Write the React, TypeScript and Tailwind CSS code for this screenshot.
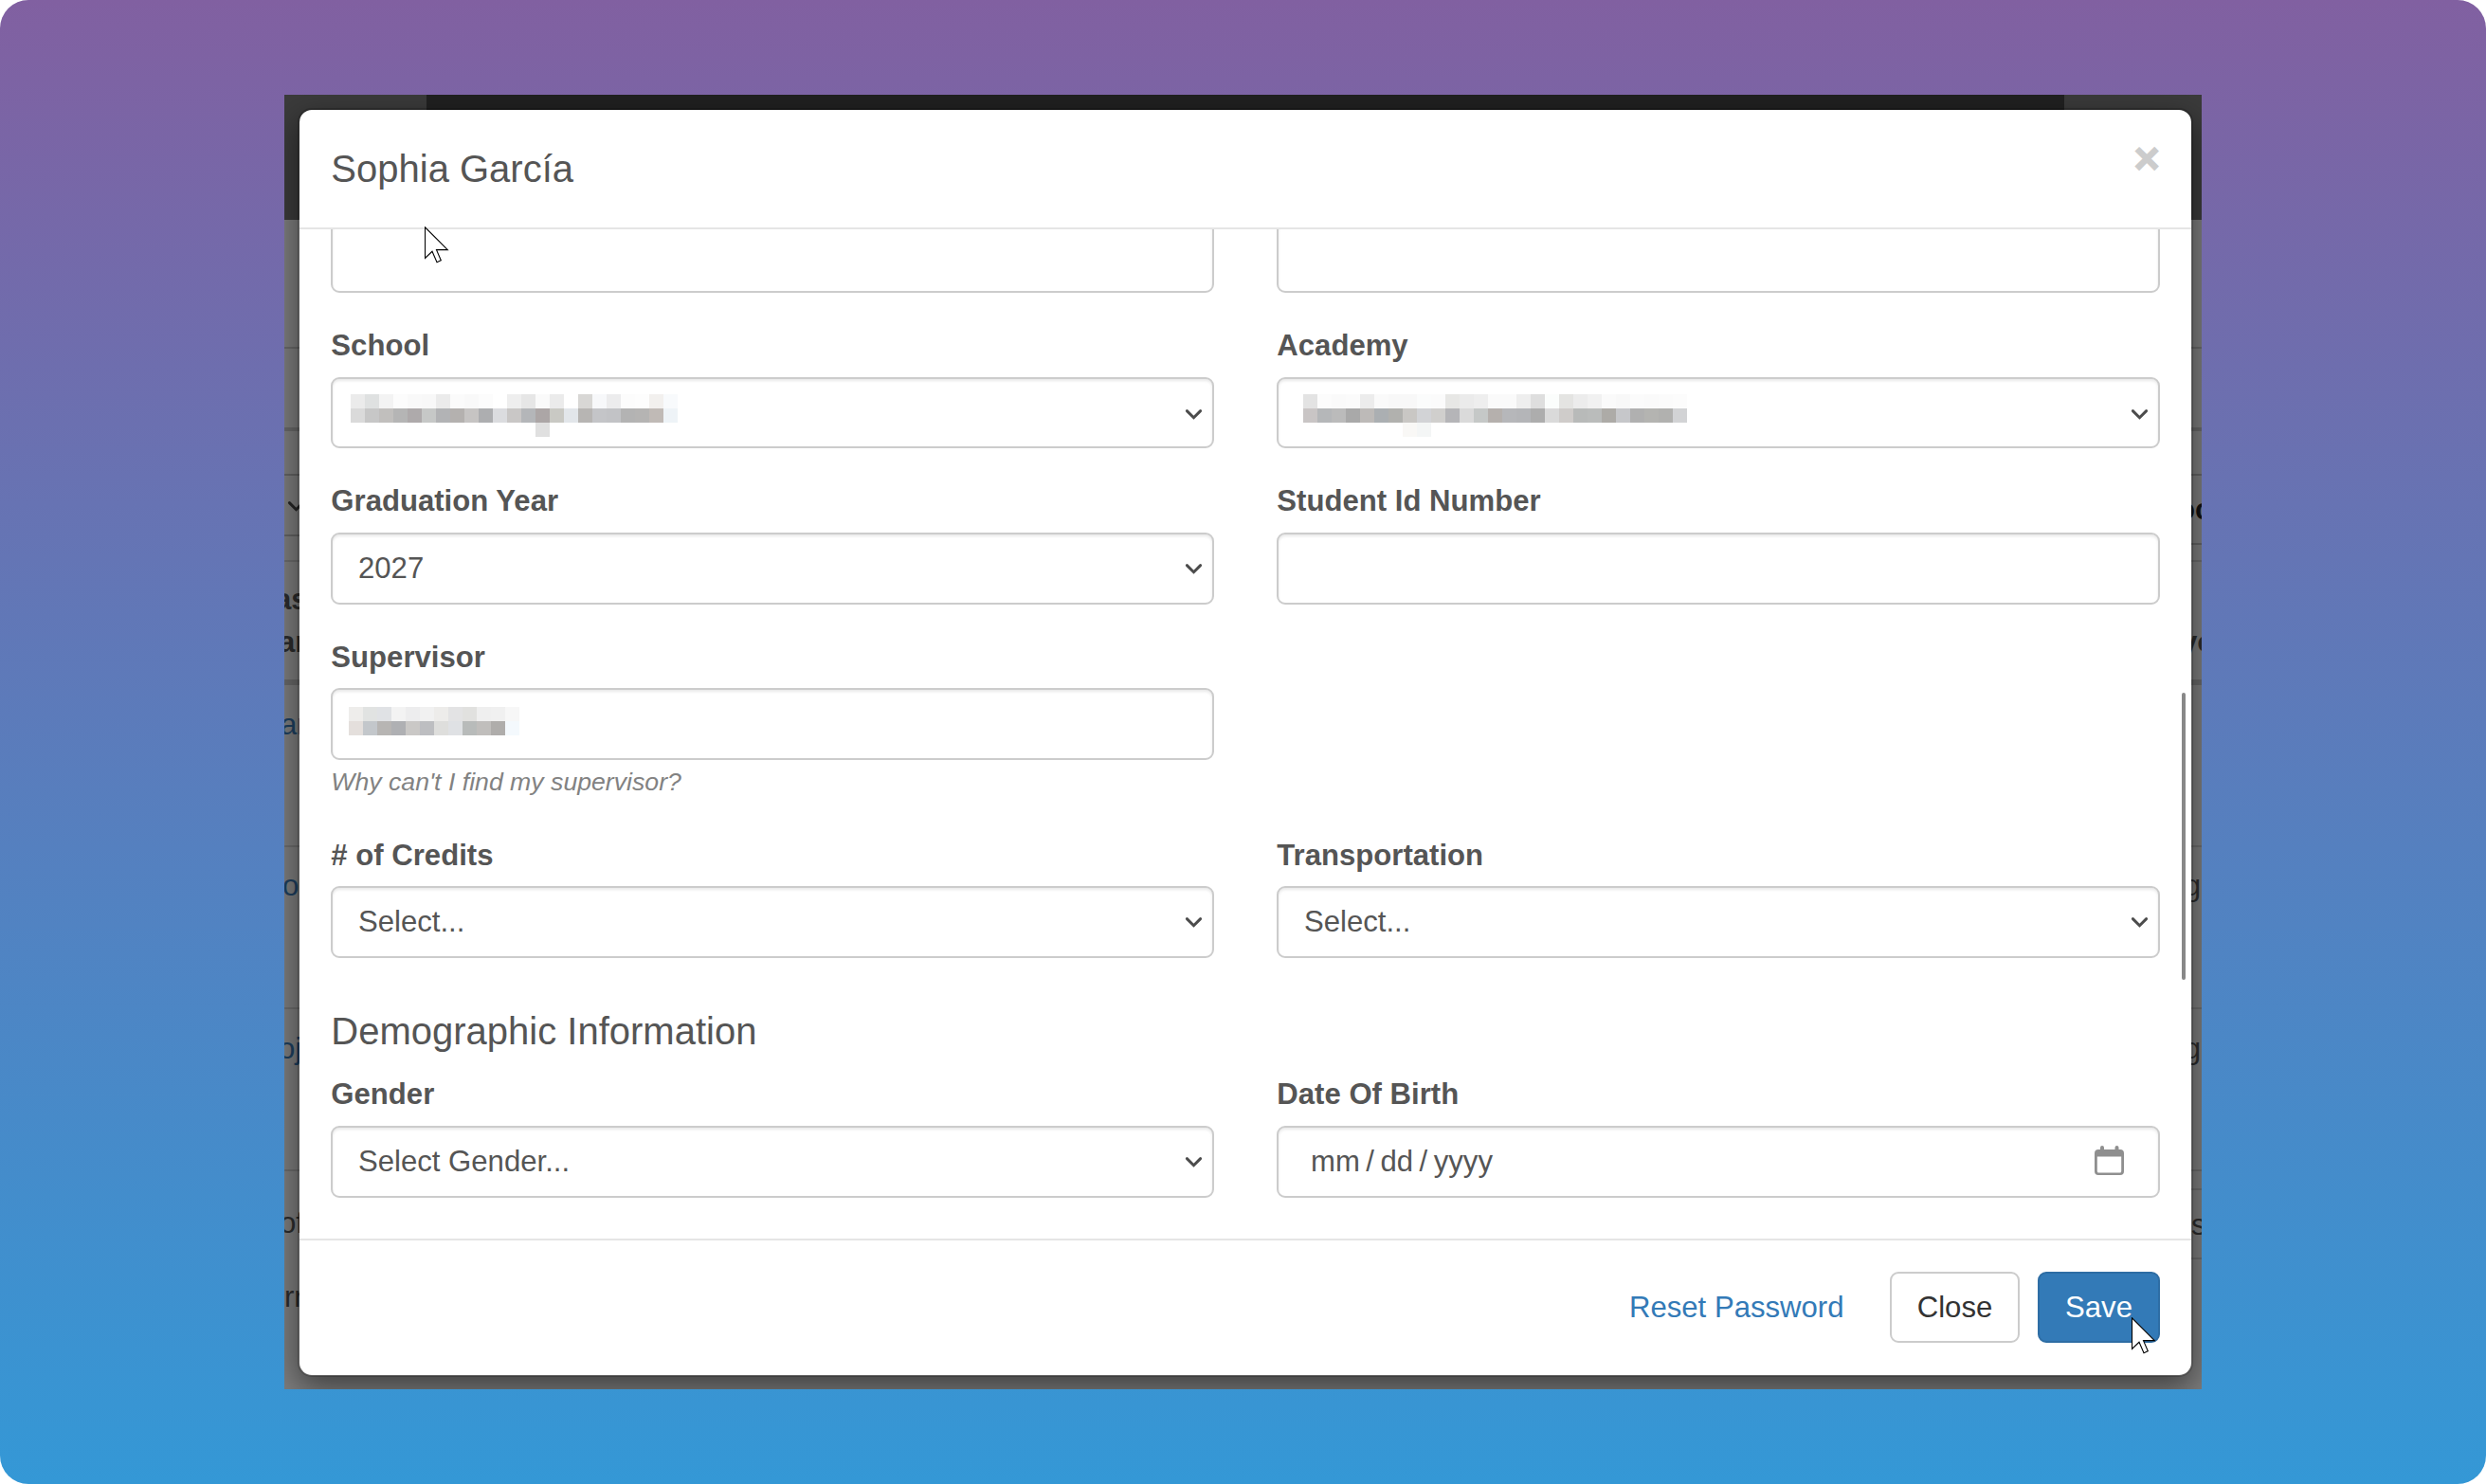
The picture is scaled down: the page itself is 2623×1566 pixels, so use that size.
import { useState, type ReactNode } from "react";

interface FieldProps {
  label: string;
  children: ReactNode;
  help?: string;
}

const CELL = 15;

// Each string is one row of the redaction mosaic, "-" leaves a cell empty
const SCHOOL_MOSAIC = [
  "ebebeb dfe1e1 f3f3f3 fcfcfc f9f9f9 f8f8f8 ebebeb fbfbfb f9f9f9 fcfcfc - eeeeee e6e6e6 fafafa ebebeb - d8d7d5 f7f8fa ececed fcfcfc fdfdfd f2f0ee f8fafc",
  "dadada c7c7c7 c1bfbd b5b5b5 aeaaab c6c8c7 b2b3b5 b4b1af c6c4c3 adaeb0 dbdcdf c9c7c6 b4b6b9 aca6a6 c9c9c4 e2e6ea b7b5b3 c4c5c8 c2c3c6 b3b3b3 b5b4b3 c0bab6 eef3f7",
  "- - - - - - - - - - - - - e0e0e0",
];

const ACADEMY_MOSAIC = [
  "e3e3e3 fcfcfc fafafa fbfbfb ececec fafafa f8f8f8 f8f8f8 fbfcfc fbfbfb e7e7e5 ebebeb eeeeee fafafa fafafa eeeeee dedede fbfdfc e4e4e2 ececec f1f1f1 fafafa f8f8f8 fbfbfb fafafa fbfbfb fcfcfc",
  "c9c5c5 b5b7b9 bbbbbb a9a9a9 bdbab8 abafb2 b1b1ae c9c7c4 d2d3d6 d0cfcd b5b5b8 dadada c5c8c7 b5b0ad b6b7ba b4b5b8 adadad dadada cfccca b8bab9 babcbb adaba7 c6c7ca b0b0b0 b4b4b1 b1b1af d2d3d5",
  "- - - - - - - f9f8f6 f4f6f6",
];

const SUPERVISOR_MOSAIC = [
  "eeedeb e1e3e2 e0e2e5 f3f3f3 ededee f1f1f1 edecea e3e3e4 e1e1df efefef f0f0f0 f7f7f7",
  "e4dfdc c3c7cb b7b5b3 afb0b3 cac8c6 bdbec1 dededc dfe1e4 b8bbba c0bebc afadab f4f9fd",
];

function Mosaic({ rows, className }: { rows: string[]; className: string }) {
  return (
    <div className={className} aria-hidden="true">
      {rows.map((row, y) => (
        <div key={y} className="flex h-[15px]">
          {row.split(" ").map((color, x) => (
            <span
              key={x}
              className="h-full"
              style={{ width: CELL, backgroundColor: color === "-" ? undefined : `#${color}` }}
            />
          ))}
        </div>
      ))}
    </div>
  );
}

function Field({ label, children, help }: FieldProps) {
  return (
    <div className="mb-[33.33px]">
      <label className="mb-[10.11px] block pt-px font-bold">{label}</label>
      {children}
      {help && <p className="-mb-px pt-px text-[26.67px] text-[#828282] italic">{help}</p>}
    </div>
  );
}

function Control({ children, center = true }: { children?: ReactNode; center?: boolean }) {
  return (
    <div
      className={`flex h-[75.56px] rounded-[9px] border-2 border-[#ccc] bg-white shadow-[inset_0_2px_3px_rgba(0,0,0,0.09)] ${
        center ? "items-center pt-px pl-[26.67px]" : "items-start"
      }`}
    >
      {children}
    </div>
  );
}

function Chevron({ className = "mr-[10px] ml-auto" }: { className?: string }) {
  return (
    <svg className={`shrink-0 ${className}`} width="19" height="13" viewBox="0 0 19 13" fill="none">
      <path d="M2.4 2.600 9.500 9.700 16.600 2.600" stroke="#4c4c4c" strokeWidth="3" strokeLinecap="round" />
    </svg>
  );
}

function CalendarIcon() {
  return (
    <svg className="mr-[36px] mb-[3px] ml-auto" width="31" height="31" viewBox="0 0 31 31" fill="#8f8f8f">
      <path
        fillRule="evenodd"
        d="M6 4V2a2 2 0 0 1 4 0v2h11.500V2a2 2 0 0 1 4 0v2H27a4 4 0 0 1 4 4v19a4 4 0 0 1-4 4H4a4 4 0 0 1-4-4V8a4 4 0 0 1 4-4ZM2.800 11.500V27a1.500 1.500 0 0 0 1.500 1.500h22.400a1.500 1.500 0 0 0 1.500-1.500V11.500Z"
      />
    </svg>
  );
}

function Pointer({ className }: { className: string }) {
  return (
    <svg className={className} width="26" height="40" viewBox="0 0 26 40">
      <path
        d="M.5.8V33.500L8 26.300 13 37.700 17.300 35.800 12.500 24.600H24.300Z"
        fill="#fff"
        stroke="#000"
        strokeWidth="1.1"
      />
    </svg>
  );
}

// Dimmed page that stays visible around the dialog
function PageBehind() {
  return (
    <div className="h-full bg-[#7d7d7d] whitespace-nowrap text-[#2c2c2c]">
      <div className="flex h-[132px] justify-between bg-[#212121]">
        <div className="w-[150px] bg-[#3b3b3b]" />
        <div className="w-[145px] bg-[#3b3b3b]" />
      </div>
      <div className="h-[136px] border-b-2 border-[#686868]" />
      <div className="h-[87px] border-b-4 border-[#686868]" />
      <div className="h-[47px] border-b-2 border-[#636363]" />
      <div className="flex h-[91px] justify-between border-b-2 border-[#6c6c6c]">
        <div className="h-[64px] w-[200px] border-b-2 border-[#636363] pt-[26px]">
          <Chevron className="ml-[3px] brightness-50" />
        </div>
        <div className="h-[73px] w-[26px] border-b-2 border-[#636363] pt-[14px] font-bold text-[#111]">
          oc
        </div>
      </div>
      <div className="flex h-[130px] justify-between border-b-6 border-[#686868] pt-[18px] font-bold">
        <div>
          <p className="-ml-[10px]">ast</p>
          <p className="-ml-[6px] pt-px">ar</p>
        </div>
        <p className="w-[22px] pt-[45px]">yo</p>
      </div>
      <div className="h-[171px] border-b-2 border-[#6c6c6c] pt-[20px]">
        <p className="-ml-[4px] text-[#1d3f5f]">ar</p>
      </div>
      <div className="flex h-[171px] justify-between border-b-2 border-[#6c6c6c] pt-[19px]">
        <p className="-ml-[2px] text-[#1d3f5f]">o</p>
        <p className="mr-px">g</p>
      </div>
      <div className="flex h-[171px] justify-between border-b-2 border-[#6c6c6c] pt-[20px]">
        <p className="-ml-[6px] text-[#1d3f5f]">oj</p>
        <p className="mr-px">g</p>
      </div>
      <div className="flex justify-between">
        <div className="pt-[33px]">
          <p className="-ml-[5px]">of</p>
          <p className="mt-[34px]">rr</p>
        </div>
        <div className="h-[93px] w-[11px] border-b-2 border-[#6c6c6c]">
          <div className="h-[20px] border-b-2 border-[#6c6c6c]" />
          <p className="pt-[15px]">s</p>
        </div>
      </div>
    </div>
  );
}

export default function App() {
  const [open, setOpen] = useState(true);

  return (
    <div className="h-[1566px] w-[2623px] overflow-hidden rounded-[30px] bg-[linear-gradient(#8160a1,#3498d6)] px-[300px] py-[100px] font-['Liberation_Sans',Arial,sans-serif] text-[31.11px] leading-[44.44px] text-[#555]">
      <div className="relative h-[1366px] w-[2023px] overflow-hidden">
        <PageBehind />

        {open && (
          <div
            role="dialog"
            className="absolute top-[14px] left-[14px] flex h-[1339px] w-[2000px] flex-col rounded-[15px] border-2 border-black/20 bg-white bg-clip-padding shadow-[0_11px_33px_rgba(0,0,0,0.5)]"
          >
            <header className="flex h-[126px] shrink-0 justify-between border-b-2 border-[#e5e5e5] px-[33.33px] pt-[40px]">
              <h4 className="text-[40px] leading-[44px]">Sophia García</h4>
              <button
                onClick={() => setOpen(false)}
                aria-label="Close dialog"
                className="-mt-[12px] h-[46px] text-[46.67px] leading-[46px] font-bold text-[#ccc] [-webkit-text-stroke:1.5px_#ccc]"
              >
                ×
              </button>
            </header>

            <div className="relative flex-1 overflow-hidden px-[33.33px]">
              <div className="-mt-[8.85px] grid grid-cols-2 gap-x-[66.67px]">
                <div className="mb-[33.33px]">
                  <Control />
                </div>
                <div className="mb-[33.33px]">
                  <Control />
                </div>
                <Field label="School">
                  <Control center={false}>
                    <Mosaic rows={SCHOOL_MOSAIC} className="mt-[16px] ml-[19px]" />
                    <Chevron className="mt-[31px] mr-[10px] ml-auto" />
                  </Control>
                </Field>
                <Field label="Academy">
                  <Control center={false}>
                    <Mosaic rows={ACADEMY_MOSAIC} className="mt-[16px] ml-[26px]" />
                    <Chevron className="mt-[31px] mr-[10px] ml-auto" />
                  </Control>
                </Field>
                <Field label="Graduation Year">
                  <Control>
                    2027
                    <Chevron />
                  </Control>
                </Field>
                <Field label="Student Id Number">
                  <Control />
                </Field>
                <Field label="Supervisor" help="Why can't I find my supervisor?">
                  <Control center={false}>
                    <Mosaic rows={SUPERVISOR_MOSAIC} className="mt-[18px] ml-[17px]" />
                  </Control>
                </Field>
                <div />
                <Field label="# of Credits">
                  <Control>
                    Select...
                    <Chevron />
                  </Control>
                </Field>
                <Field label="Transportation">
                  <Control>
                    Select...
                    <Chevron />
                  </Control>
                </Field>
              </div>

              <h4 className="mt-[22.05px] mb-[22.22px] text-[40px] leading-[44px]">
                Demographic Information
              </h4>
              <div className="grid grid-cols-2 gap-x-[66.67px]">
                <Field label="Gender">
                  <Control>
                    Select Gender...
                    <Chevron />
                  </Control>
                </Field>
                <Field label="Date Of Birth">
                  <Control>
                    <span className="ml-[7px]">mm</span>
                    <span className="mx-[6.5px]">/</span>
                    <span>dd</span>
                    <span className="mx-[6.5px]">/</span>
                    <span>yyyy</span>
                    <CalendarIcon />
                  </Control>
                </Field>
              </div>

              {/* scrollbar thumb */}
              <div className="absolute top-[489px] right-[6px] h-[303px] w-[4px] rounded-full bg-[#888]" />
            </div>

            <footer className="flex h-[144px] shrink-0 items-start justify-end border-t-2 border-[#e5e5e5] px-[33px] pt-[33px]">
              <button className="mr-[48.5px] h-[75px] pt-[2px] text-[#337ab7]">Reset Password</button>
              <button
                onClick={() => setOpen(false)}
                className="mr-[19px] h-[75px] w-[137px] rounded-[9px] border-2 border-[#ccc] pt-[2px] text-[#333]"
              >
                Close
              </button>
              <button className="h-[75px] w-[129px] rounded-[9px] border-2 border-[#2e6da4] bg-[#337ab7] pt-[2px] text-white">
                Save
              </button>
            </footer>
          </div>
        )}

        <Pointer className="absolute top-[139px] left-[148px]" />
        <Pointer className="absolute top-[1290px] left-[1949px]" />
      </div>
    </div>
  );
}
